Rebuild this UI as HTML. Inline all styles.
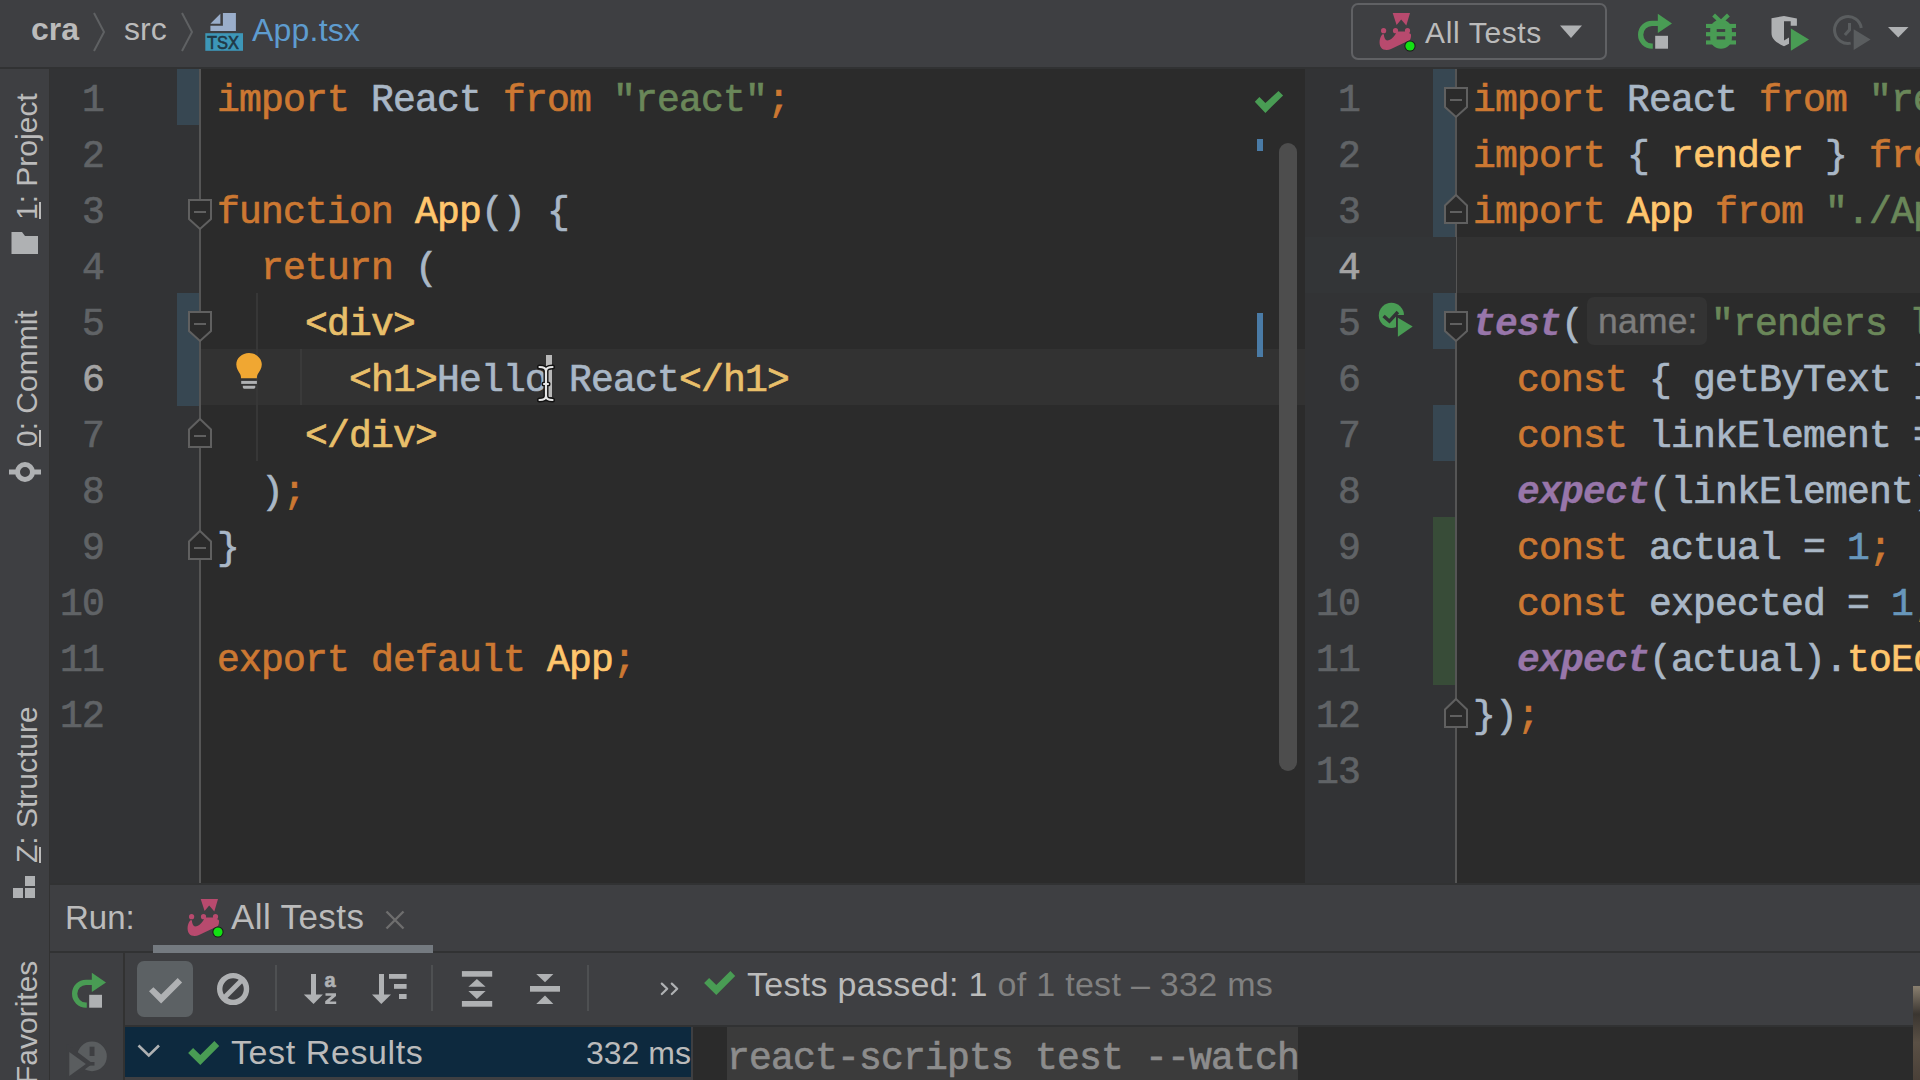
<!DOCTYPE html>
<html><head><meta charset="utf-8">
<style>
*{margin:0;padding:0;box-sizing:border-box}
html,body{width:1920px;height:1080px;overflow:hidden;background:#3e3f42}
body{position:relative;font-family:"Liberation Sans",sans-serif;color:#bbbbbb}
.a{position:absolute}
.u{position:absolute;white-space:nowrap;color:#bbbbbb}
.code{position:absolute;font-family:"Liberation Mono",monospace;font-size:38px;letter-spacing:-0.8px;line-height:56px;white-space:pre;color:#a9b7c6;-webkit-text-stroke:0.7px currentColor}
.k{color:#cc7832}.f{color:#ffc66d}.s{color:#6a8759}.t{color:#e8bf6a}.n{color:#6897bb}.j{color:#9876aa;font-weight:bold;font-style:italic;-webkit-text-stroke:0.3px currentColor}
.ln{position:absolute;font-family:"Liberation Mono",monospace;font-size:38px;letter-spacing:-0.8px;line-height:56px;white-space:pre;color:#606366;text-align:right;-webkit-text-stroke:0.7px currentColor}
.vt{position:absolute;transform-origin:0 0;transform:rotate(-90deg);white-space:nowrap;font-size:30px;line-height:30px;color:#bbbbbb}
</style></head><body>

<!-- ===== frame ===== -->
<div class="a" style="left:0;top:0;width:1920px;height:67px;background:#3e3f42"></div>
<div class="a" style="left:0;top:67px;width:1920px;height:2px;background:#313233"></div>
<div class="a" style="left:0;top:69px;width:49px;height:1011px;background:#3e3f42"></div>
<div class="a" style="left:49px;top:69px;width:1px;height:1011px;background:#323232"></div>

<!-- left editor -->
<div class="a" style="left:50px;top:69px;width:150px;height:814px;background:#323335"></div>
<div class="a" style="left:199px;top:69px;width:2px;height:814px;background:#555555"></div>
<div class="a" style="left:201px;top:69px;width:1104px;height:814px;background:#2b2b2b"></div>

<!-- right editor -->
<div class="a" style="left:1305px;top:69px;width:151px;height:814px;background:#323335"></div>
<div class="a" style="left:1455px;top:69px;width:2px;height:814px;background:#555555"></div>
<div class="a" style="left:1457px;top:69px;width:463px;height:814px;background:#2b2b2b"></div>

<!-- bottom panel frame -->
<div class="a" style="left:50px;top:883px;width:1870px;height:2px;background:#313233"></div>
<div class="a" style="left:50px;top:885px;width:1870px;height:66px;background:#3e3f42"></div>
<div class="a" style="left:50px;top:951px;width:1870px;height:2px;background:#313233"></div>
<div class="a" style="left:50px;top:953px;width:1870px;height:127px;background:#3e3f42"></div>
<div class="a" style="left:123px;top:953px;width:2px;height:127px;background:#323232"></div>
<div class="a" style="left:125px;top:1025px;width:1795px;height:2px;background:#313233"></div>
<div class="a" style="left:125px;top:1027px;width:566px;height:53px;background:#3e3f42"></div>
<div class="a" style="left:125px;top:1027px;width:566px;height:50px;background:#0d293e"></div>
<div class="a" style="left:691px;top:1027px;width:2px;height:53px;background:#3e3f42"></div>
<div class="a" style="left:693px;top:1027px;width:1227px;height:53px;background:#2b2b2b"></div>

<!-- ===== top bar ===== -->
<div class="u" style="left:31px;top:9px;font-size:32px;line-height:40px;font-weight:bold">cra</div>
<svg class="a" style="left:90px;top:12px" width="20" height="40" viewBox="0 0 20 40"><path d="M4 1 L14 20 L4 39" fill="none" stroke="#5f6163" stroke-width="2"/></svg>
<div class="u" style="left:124px;top:9px;font-size:32px;line-height:40px">src</div>
<svg class="a" style="left:178px;top:12px" width="20" height="40" viewBox="0 0 20 40"><path d="M4 1 L14 20 L4 39" fill="none" stroke="#5f6163" stroke-width="2"/></svg>
<svg class="a" style="left:200px;top:8px" width="50" height="50" viewBox="0 0 50 50">
 <path d="M22.9 5.1 H35.9 V22.9 H10.4 V17.8 H22.9 Z" fill="#9aaecb"/>
 <path d="M10.4 15.7 L20.4 5.8 V15.7 Z" fill="#9aaecb"/>
 <rect x="5.3" y="25.2" width="37.7" height="17.6" fill="#3d97b8"/>
 <text x="23" y="40.8" font-family="Liberation Sans" font-size="17.5" fill="#213846" text-anchor="middle" textLength="32" lengthAdjust="spacingAndGlyphs" stroke="#213846" stroke-width="0.6">TSX</text>
</svg>
<div class="u" style="left:252px;top:10px;font-size:32px;line-height:40px;letter-spacing:0.2px;color:#5e9ccf">App.tsx</div>

<!-- run config combo -->
<div class="a" style="left:1351px;top:3px;width:256px;height:57px;border:2px solid #606164;border-radius:7px"></div>
<svg class="a" style="left:1370px;top:8px" width="50" height="50" viewBox="0 0 50 50">
 <path d="M22.7 5.1 H40 L36.3 17.6 L31.2 11.6 L26.6 17.1 Z" fill="#b84a6e"/>
 <circle cx="13.6" cy="22.7" r="2.6" fill="#b84a6e"/><circle cx="25.5" cy="22.7" r="2.6" fill="#b84a6e"/><circle cx="37.5" cy="22.7" r="2.6" fill="#b84a6e"/>
 <path d="M12.5 26.3 C9.5 29 8.5 36 11 39.5 C13 42.5 18 42.5 21 41 L40 32 C41 30 41.3 28 40.8 26 L36 23.6 H27 C24.5 28.5 21 32.5 17 32.6 C15 32 14 29 13.8 26.3 Z" fill="#b84a6e"/>
 <circle cx="40" cy="38" r="5.6" fill="#1a1a1a"/><circle cx="40" cy="38" r="4.6" fill="#13e013"/>
</svg>
<div class="u" style="left:1425px;top:13px;font-size:30px;line-height:40px;letter-spacing:0.65px">All Tests</div>
<svg class="a" style="left:1560px;top:25px" width="23" height="14" viewBox="0 0 23 14"><path d="M0 0.5 H22 L11 13 Z" fill="#afb1b3"/></svg>

<!-- rerun -->
<svg class="a" style="left:1630px;top:8px" width="50" height="47" viewBox="0 0 50 47">
 <path d="M28.5 15.4 H22 A11.35 11.35 0 0 0 22 38.1 H22.8" fill="none" stroke="#499c54" stroke-width="5.3"/>
 <path d="M27.8 5.65 L42 15.4 L27.8 25 Z" fill="#499c54"/>
 <rect x="25.2" y="27.8" width="12.8" height="12.9" fill="#afb1b3"/>
</svg>
<!-- debug -->
<svg class="a" style="left:1698px;top:8px" width="47" height="47" viewBox="0 0 47 47">
 <g fill="#499c54">
  <path d="M14.2 8.4 L17 5.6 L23 11.3 L29 5.6 L31.8 8.4 L27.5 12.6 C31 14.2 33.9 17.5 33.9 22 V30 C33.9 36.5 29 40.7 23 40.7 C17 40.7 12.2 36.5 12.2 30 V22 C12.2 17.5 15 14.2 18.5 12.6 Z"/>
  <rect x="8" y="15.9" width="30" height="4.1"/>
  <rect x="8" y="24.1" width="30" height="4.2"/>
  <rect x="8" y="32.4" width="30" height="4.1"/>
 </g>
 <rect x="18.7" y="21.1" width="8.5" height="2.8" fill="#3e3f42"/>
 <rect x="18.7" y="28.3" width="8.5" height="3.2" fill="#3e3f42"/>
</svg>
<!-- coverage -->
<svg class="a" style="left:1765px;top:8px" width="50" height="50" viewBox="0 0 50 50">
 <path d="M6.5 10.2 L19 7.9 L31.9 10.6 V17.8 H25.7 V13.2 H19 V32.4 L24 29.6 V35.8 L19 38.2 C11.5 34.8 6.5 31 6.5 25 Z" fill="#afb1b3"/>
 <path d="M25.9 20.4 L44 31.5 L25.9 42.8 Z" fill="#499c54"/>
</svg>
<!-- profiler (disabled) -->
<svg class="a" style="left:1828px;top:8px" width="50" height="50" viewBox="0 0 50 50">
 <path d="M33.2 19.9 A13.4 13.4 0 1 0 22.7 35.1" fill="none" stroke="#5a5d5f" stroke-width="3"/>
 <path d="M21.5 15 V21.8 L16.9 26.9" fill="none" stroke="#5a5d5f" stroke-width="3"/>
 <path d="M25.7 21.3 L42.6 31.5 L25.7 41.9 Z" fill="#5a5d5f"/>
</svg>
<svg class="a" style="left:1888px;top:27px" width="22" height="12" viewBox="0 0 22 12"><path d="M0 0 H20.5 L10.25 10.5 Z" fill="#afb1b3"/></svg>

<!-- ===== left strip ===== -->
<div class="vt" style="left:12px;top:220px">1: Project</div>
<div class="a" style="left:39px;top:202px;width:2px;height:17px;background:#bbbbbb"></div>
<svg class="a" style="left:11px;top:232px" width="28" height="24" viewBox="0 0 28 24"><path d="M0.5 0 H11 L14 4 H27 V22 H0.5 Z" fill="#afb1b3"/></svg>
<div class="vt" style="left:12px;top:447px">0: Commit</div>
<div class="a" style="left:39px;top:430px;width:2px;height:17px;background:#bbbbbb"></div>
<svg class="a" style="left:8px;top:458px" width="34" height="28" viewBox="0 0 34 28"><circle cx="17" cy="14" r="7.5" fill="none" stroke="#afb1b3" stroke-width="5"/><rect x="1" y="11.5" width="8" height="5" fill="#afb1b3"/><rect x="25" y="11.5" width="8" height="5" fill="#afb1b3"/></svg>
<div class="vt" style="left:12px;top:863px">Z: Structure</div>
<div class="a" style="left:39px;top:847px;width:2px;height:16px;background:#bbbbbb"></div>
<svg class="a" style="left:13px;top:876px" width="24" height="24" viewBox="0 0 24 24"><rect x="0" y="12" width="10" height="10" fill="#afb1b3"/><rect x="12" y="12" width="10" height="10" fill="#afb1b3"/><rect x="12" y="0" width="10" height="10" fill="#afb1b3"/></svg>
<div class="vt" style="left:12px;top:1084px">Favorites</div>

<!-- ===== left editor content ===== -->
<div class="a" style="left:201px;top:349px;width:1104px;height:56px;background:#323232"></div>
<div class="a" style="left:177px;top:69px;width:22px;height:56px;background:#374752"></div>
<div class="a" style="left:177px;top:293px;width:22px;height:113px;background:#374752"></div>
<div class="a" style="left:256px;top:293px;width:2px;height:168px;background:#373737"></div>
<div class="a" style="left:300px;top:349px;width:2px;height:56px;background:#3a3a3a"></div>
<div class="ln" style="left:50px;top:73px;width:54px">1
2
3
4
5
<span style="color:#a4a3a3">6</span>
7
8
9
10
11
12</div>
<div class="code" style="left:217px;top:73px"><span class="k">import</span> React <span class="k">from</span> <span class="s">"react"</span><span class="k">;</span>

<span class="k">function</span> <span class="f">App</span>() {
  <span class="k">return</span> (
    <span class="t">&lt;div&gt;</span>
      <span class="t">&lt;h1&gt;</span>Hello React<span class="t">&lt;/h1&gt;</span>
    <span class="t">&lt;/div&gt;</span>
  )<span class="k">;</span>
}

<span class="k">export default</span> <span class="f">App</span><span class="k">;</span>
</div>
<svg class="a" style="left:150px;top:69px" width="80" height="814" viewBox="150 69 80 814">
 <g fill="#2b2b2b" stroke="#606060" stroke-width="2">
  <path d="M189 200 H211 V219 L200 229 L189 219 Z"/>
  <path d="M189 312 H211 V331 L200 341 L189 331 Z"/>
  <path d="M200 419 L211 429.5 V447 H189 V429.5 Z"/>
  <path d="M200 531 L211 541.5 V559 H189 V541.5 Z"/>
 </g>
 <g fill="#606060">
  <rect x="194" y="211" width="12" height="2"/>
  <rect x="194" y="323" width="12" height="2"/>
  <rect x="194" y="435" width="12" height="2"/>
  <rect x="194" y="547" width="12" height="2"/>
 </g>
</svg>
<!-- lightbulb -->
<svg class="a" style="left:225px;top:345px" width="50" height="50" viewBox="0 0 50 50">
 <path d="M24 8.1 C17 8.1 11.3 13.3 11.3 19.6 C11.3 23.5 13.5 26.5 15.2 29.2 C15.9 30.4 16 32 16 33.3 H31.9 C31.9 32 32 30.4 32.7 29.2 C34.5 26.5 36.8 23.5 36.8 19.6 C36.8 13.3 31 8.1 24 8.1 Z" fill="#f0a732"/>
 <rect x="16.2" y="35.9" width="15.7" height="3" fill="#afb1b3"/>
 <path d="M17.8 40.7 H30.3 V42 C30.3 43.2 29.5 43.8 28.5 43.8 H19.6 C18.6 43.8 17.8 43.2 17.8 42 Z" fill="#afb1b3"/>
</svg>
<!-- caret + ibeam -->
<div class="a" style="left:546px;top:355px;width:6px;height:42px;background:#b8b8b8"></div>
<svg class="a" style="left:535px;top:363px" width="24" height="42" viewBox="0 0 24 42">
 <g fill="none" stroke-linecap="round">
 <path d="M4.5 4 C8 4 11 5 11 8 C11 5 14 4 17.5 4 M11 8 V34 M4.5 37 C8 37 11 36 11 33 C11 36 14 37 17.5 37 M9 21 H13" stroke="#111" stroke-width="5"/>
 <path d="M4.5 4 C8 4 11 5 11 8 C11 5 14 4 17.5 4 M11 8 V34 M4.5 37 C8 37 11 36 11 33 C11 36 14 37 17.5 37 M9 21 H13" stroke="#e6e6e6" stroke-width="2.2"/>
 </g>
</svg>
<!-- editor status check, markers, scrollbar -->
<svg class="a" style="left:1245px;top:80px" width="50" height="45" viewBox="1245 80 50 45"><path d="M1254.8 101.7 L1259.4 97.1 L1265.4 103.1 L1278.5 90.9 L1283.1 95.4 L1265.4 112.9 Z" fill="#499c54"/></svg>
<div class="a" style="left:1257px;top:139px;width:6px;height:12px;background:#4a7ba6"></div>
<div class="a" style="left:1257px;top:313px;width:6px;height:44px;background:#4a7ba6"></div>
<div class="a" style="left:1279px;top:143px;width:18px;height:628px;background:#4d4d4d;border-radius:9px"></div>

<!-- ===== right editor content ===== -->
<div class="a" style="left:1305px;top:237px;width:151px;height:56px;background:#333537"></div>
<div class="a" style="left:1457px;top:237px;width:463px;height:56px;background:#323232"></div>
<div class="a" style="left:1433px;top:69px;width:22px;height:168px;background:#374752"></div>
<div class="a" style="left:1433px;top:293px;width:22px;height:56px;background:#374752"></div>
<div class="a" style="left:1433px;top:405px;width:22px;height:56px;background:#374752"></div>
<div class="a" style="left:1433px;top:517px;width:22px;height:168px;background:#384c38"></div>
<div class="a" style="left:1587px;top:297px;width:120px;height:48px;background:#333333;border-radius:7px"></div>
<div class="ln" style="left:1305px;top:73px;width:55px">1
2
3
<span style="color:#a4a3a3">4</span>
5
6
7
8
9
10
11
12
13</div>
<div class="code" style="left:1473px;top:73px"><span class="k">import</span> React <span class="k">from</span> <span class="s">"react"</span><span class="k">;</span>
<span class="k">import</span> { <span class="f">render</span> } <span class="k">from</span> <span class="s">"@testing-library/react"</span><span class="k">;</span>
<span class="k">import</span> <span class="f">App</span> <span class="k">from</span> <span class="s">"./App"</span><span class="k">;</span>

<span class="j">test</span>(<span style="display:inline-block;width:128px"></span><span class="s">"renders learn react link"</span>, () =&gt; {
  <span class="k">const</span> { getByText } = <span class="f">render</span>(&lt;App /&gt;)<span class="k">;</span>
  <span class="k">const</span> linkElement = getByText(/learn react/i)<span class="k">;</span>
  <span class="j">expect</span>(linkElement).<span class="f">toBeInTheDocument</span>()<span class="k">;</span>
  <span class="k">const</span> actual = <span class="n">1</span><span class="k">;</span>
  <span class="k">const</span> expected = <span class="n">1</span><span class="k">;</span>
  <span class="j">expect</span>(actual).<span class="f">toEqual</span>(expected)<span class="k">;</span>
})<span class="k">;</span>
</div>
<div class="u" style="left:1598px;top:298px;font-size:35.5px;line-height:46px;letter-spacing:0.2px;color:#7c7c7c;-webkit-text-stroke:0.4px currentColor">name:</div>
<svg class="a" style="left:1420px;top:69px" width="60" height="814" viewBox="1420 69 60 814">
 <g fill="#2b2b2b" stroke="#606060" stroke-width="2">
  <path d="M1445 88 H1467 V107 L1456 117 L1445 107 Z"/>
  <path d="M1456 195 L1467 205.5 V223 H1445 V205.5 Z"/>
  <path d="M1445 312 H1467 V331 L1456 341 L1445 331 Z"/>
  <path d="M1456 699 L1467 709.5 V727 H1445 V709.5 Z"/>
 </g>
 <g fill="#606060">
  <rect x="1450" y="99" width="12" height="2"/>
  <rect x="1450" y="211" width="12" height="2"/>
  <rect x="1450" y="323" width="12" height="2"/>
  <rect x="1450" y="715" width="12" height="2"/>
 </g>
</svg>
<!-- run test gutter icon -->
<svg class="a" style="left:1372px;top:296px" width="50" height="50" viewBox="0 0 50 50">
 <circle cx="19.4" cy="19.4" r="12.6" fill="#499c54"/>
 <path d="M11.6 19.9 L17.4 25.2 L25.9 16" fill="none" stroke="#323335" stroke-width="3.4"/>
 <path d="M24 19 H45 V45 H24 Z" fill="#323335"/>
 <path d="M25.9 21.8 L40.7 30.6 L25.9 40.7 Z" fill="#499c54"/>
</svg>

<!-- ===== run panel ===== -->
<div class="u" style="left:65px;top:898px;font-size:33px;line-height:40px">Run:</div>
<svg class="a" style="left:178px;top:894px" width="50" height="50" viewBox="0 0 50 50">
 <path d="M22.7 5.1 H40 L36.3 17.6 L31.2 11.6 L26.6 17.1 Z" fill="#b84a6e"/>
 <circle cx="13.6" cy="22.7" r="2.6" fill="#b84a6e"/><circle cx="25.5" cy="22.7" r="2.6" fill="#b84a6e"/><circle cx="37.5" cy="22.7" r="2.6" fill="#b84a6e"/>
 <path d="M12.5 26.3 C9.5 29 8.5 36 11 39.5 C13 42.5 18 42.5 21 41 L40 32 C41 30 41.3 28 40.8 26 L36 23.6 H27 C24.5 28.5 21 32.5 17 32.6 C15 32 14 29 13.8 26.3 Z" fill="#b84a6e"/>
 <circle cx="40" cy="38" r="5.6" fill="#1a1a1a"/><circle cx="40" cy="38" r="4.6" fill="#13e013"/>
</svg>
<div class="u" style="left:231px;top:897px;font-size:35px;line-height:40px;letter-spacing:0.4px">All Tests</div>
<svg class="a" style="left:384px;top:909px" width="22" height="22" viewBox="0 0 22 22"><path d="M2.5 2.5 L19.5 19.5 M19.5 2.5 L2.5 19.5" stroke="#6e6e6e" stroke-width="2.4"/></svg>
<div class="a" style="left:153px;top:945px;width:280px;height:8px;background:#747a80"></div>

<!-- left column: rerun + rerun failed -->
<svg class="a" style="left:64px;top:967px" width="50" height="47" viewBox="0 0 50 47">
 <path d="M28.5 15.4 H22 A11.35 11.35 0 0 0 22 38.1 H22.8" fill="none" stroke="#499c54" stroke-width="5.3"/>
 <path d="M27.8 5.65 L42 15.4 L27.8 25 Z" fill="#499c54"/>
 <rect x="25.2" y="27.8" width="12.8" height="12.9" fill="#afb1b3"/>
</svg>
<svg class="a" style="left:60px;top:1030px" width="60" height="50" viewBox="0 0 60 50">
 <circle cx="32" cy="26.4" r="14.8" fill="#5a5d5f"/>
 <path d="M9.3 19 L28.5 33.5 L9.3 48 Z" fill="#3e3f42" stroke="#3e3f42" stroke-width="5"/>
 <path d="M9.3 22 L25.9 34 L9.3 46 Z" fill="#5a5d5f"/>
 <rect x="29.6" y="16.7" width="4.9" height="9.3" fill="#3e3f42"/>
 <rect x="28" y="32" width="6.5" height="3.6" fill="#3e3f42"/>
</svg>

<!-- toolbar -->
<div class="a" style="left:137px;top:961px;width:56px;height:56px;background:#5c6164;border-radius:7px"></div>
<svg class="a" style="left:130px;top:955px" width="70" height="70" viewBox="130 955 70 70"><path d="M149 991.2 L153.4 987.2 L161.1 994.6 L177.7 978 L182.1 982.4 L161.1 1003.4 Z" fill="#afb1b3"/></svg>
<svg class="a" style="left:210px;top:966px" width="46" height="46" viewBox="210 966 46 46">
 <circle cx="233.1" cy="989" r="13.4" fill="none" stroke="#afb1b3" stroke-width="5.4"/>
 <path d="M222.5 999.5 L243.5 978.5" stroke="#afb1b3" stroke-width="5"/>
</svg>
<div class="a" style="left:275px;top:965px;width:2px;height:46px;background:#4e5052"></div>
<svg class="a" style="left:296px;top:965px" width="120" height="47" viewBox="296 965 120 47">
 <g fill="#afb1b3">
 <rect x="311" y="974" width="5" height="21"/><path d="M303.8 994.4 H322.9 L313.5 1004 Z"/>
 <path d="M379 974 H384 V995 H379 Z"/><path d="M372 994.4 H391 L381.3 1004 Z"/>
 <rect x="389" y="974" width="17.6" height="4.8"/>
 <rect x="394" y="984" width="12.6" height="4.8"/>
 <rect x="399" y="994" width="7.6" height="5"/>
 </g>
 <text x="330" y="987" font-family="Liberation Sans" font-weight="bold" font-size="20" fill="#afb1b3" stroke="#afb1b3" stroke-width="0.6" text-anchor="middle">a</text>
 <path d="M325.5 993.3 H336 V996 L329.5 1001.5 H336.2 V1004 H325.2 V1001.3 L331.7 995.8 H325.5 Z" fill="#afb1b3"/>
</svg>
<div class="a" style="left:431px;top:965px;width:2px;height:46px;background:#4e5052"></div>
<svg class="a" style="left:455px;top:962px" width="120" height="50" viewBox="455 962 120 50">
 <g fill="#afb1b3">
 <rect x="461.9" y="971.1" width="30.3" height="5.6"/>
 <rect x="461.9" y="1001" width="30.3" height="5.7"/>
 <path d="M468.4 986.7 H485.6 L476.9 978.9 Z"/>
 <path d="M468.4 991 H485.6 L476.9 998.9 Z"/>
 <rect x="530" y="986" width="30" height="5.7"/>
 <path d="M536.25 973.9 H553.4 L545 982.3 Z"/>
 <path d="M536.25 1003.9 H553.4 L545 995.4 Z"/>
 </g>
</svg>
<div class="a" style="left:587px;top:965px;width:2px;height:46px;background:#4e5052"></div>
<svg class="a" style="left:650px;top:970px" width="40" height="35" viewBox="650 970 40 35"><path d="M661.8 983.6 L667.2 988.8 L661.8 994 M671.8 983.6 L677.2 988.8 L671.8 994" fill="none" stroke="#afb1b3" stroke-width="2.2" stroke-linecap="round" stroke-linejoin="round"/></svg>
<svg class="a" style="left:695px;top:962px" width="50" height="40" viewBox="695 962 50 40"><path d="M704.1 982.9 L709.1 977.9 L716.3 985.1 L730.4 970.9 L735.2 975.9 L716.3 995 Z" fill="#499c54"/></svg>
<div class="u" style="left:747px;top:964px;font-size:34px;line-height:40px;letter-spacing:0.3px">Tests passed: 1 <span style="color:#808080">of 1 test &#8211; 332 ms</span></div>

<!-- tree -->
<svg class="a" style="left:135px;top:1040px" width="28" height="22" viewBox="0 0 28 22"><path d="M3.5 5.5 L13.8 15.5 L24 5.5" fill="none" stroke="#afb1b3" stroke-width="2.6"/></svg>
<svg class="a" style="left:179px;top:1032px" width="50" height="40" viewBox="695 962 50 40"><path d="M704.1 982.9 L709.1 977.9 L716.3 985.1 L730.4 970.9 L735.2 975.9 L716.3 995 Z" fill="#499c54"/></svg>
<div class="u" style="left:231px;top:1032px;font-size:34px;line-height:40px;letter-spacing:0.6px">Test Results</div>
<div class="u" style="left:586px;top:1033px;font-size:32px;line-height:40px">332 ms</div>

<!-- console -->
<div class="a" style="left:727px;top:1027px;width:571px;height:53px;background:#3b3b3b"></div>
<div class="code" style="left:727px;top:1031px;color:#8c8c8c">react-scripts test --watch</div>
<div class="a" style="left:1913px;top:986px;width:7px;height:94px;background:linear-gradient(#8a8070,#3a3530 30%,#5a5045 60%,#4a4038)"></div>

</body></html>
